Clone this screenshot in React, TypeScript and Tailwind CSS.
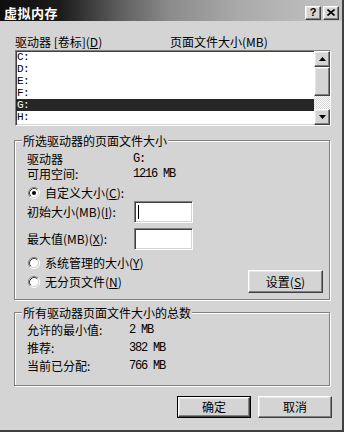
import React from "react";

const raised =
  "border border-t-white border-l-white border-r-[#404040] border-b-[#404040] shadow-[inset_-1px_-1px_0_#808080,inset_1px_1px_0_#e6e6e6] bg-[#d4d4d4]";
const sunken =
  "border border-t-[#808080] border-l-[#808080] border-r-white border-b-white shadow-[inset_1px_1px_0_#404040,inset_-1px_-1px_0_#d4d4d4]";
const etched =
  "border border-[#808080] shadow-[inset_1px_1px_0_#ffffff,1px_1px_0_#ffffff]";
const monoList = "font-['Liberation_Mono',monospace] text-[11px] leading-[12px] tracking-[-0.6px]";
const mono = "font-['Liberation_Mono',monospace] text-[12px] leading-[12px] tracking-[-1.2px]";

function Radio({ checked }: { checked?: boolean }) {
  return (
    <svg width="12" height="12" viewBox="0 0 12 12" className="shrink-0">
      <circle cx="6" cy="6" r="4.2" fill="#fff" />
      <path d="M2.11 9.89 A5.5 5.5 0 0 1 9.89 2.11" stroke="#808080" fill="none" />
      <path d="M9.89 2.11 A5.5 5.5 0 0 1 2.11 9.89" stroke="#ffffff" fill="none" />
      <path d="M2.82 9.18 A4.5 4.5 0 0 1 9.18 2.82" stroke="#404040" fill="none" />
      <path d="M9.18 2.82 A4.5 4.5 0 0 1 2.82 9.18" stroke="#d4d4d4" fill="none" />
      {checked && <circle cx="6" cy="6" r="2" fill="#000" />}
    </svg>
  );
}

function Arrow({ up }: { up?: boolean }) {
  return (
    <svg width="7" height="4" viewBox="0 0 7 4">
      <polygon points={up ? "3.5,0 7,4 0,4" : "0,0 7,0 3.5,4"} fill="#000" />
    </svg>
  );
}

function U({ c }: { c: string }) {
  return <u className="underline underline-offset-[1px]">{c}</u>;
}

export default function App() {
  const drives = ["C:", "D:", "E:", "F:", "G:", "H:"];
  return (
    <div className="w-[344px] h-[432px] bg-[#d4d4d4] font-['Noto_Sans_CJK_SC',sans-serif] text-[12px] leading-[12px] text-black flex flex-col overflow-hidden border-r-2 border-b-2 border-r-[#404040] border-b-[#404040]">
      {/* title bar */}
      <div className="h-[21px] shrink-0 flex items-center justify-between pt-[4px] pl-[4px] pr-[3px] bg-[linear-gradient(90deg,#0e0e0e_0%,#1c1c1c_18%,#5e5e5e_35%,#8c8c8c_50%,#aaaaaa_70%,#c4c4c4_100%)]">
        <span className="text-white font-bold text-[13px] leading-[14px] tracking-[0.5px]">虚拟内存</span>
        <div className="flex gap-[2px]">
          <div className={`w-[16px] h-[14px] flex items-center justify-center ${raised}`}>
            <span className="font-['Liberation_Sans',sans-serif] font-bold text-[11px] leading-[11px]">?</span>
          </div>
          <div className={`w-[16px] h-[14px] flex items-center justify-center ${raised}`}>
            <svg width="8" height="7" viewBox="0 0 8 7">
              <path d="M0.5 0.5 L7.5 6.5 M7.5 0.5 L0.5 6.5" stroke="#000" strokeWidth="1.6" />
            </svg>
          </div>
        </div>
      </div>

      {/* list labels */}
      <div className="mt-[15px] ml-[15px] h-[12px] flex">
        <span className="w-[155px]">
          驱动器 [卷标](<U c="D" />)
        </span>
        <span>页面文件大小(MB)</span>
      </div>

      {/* drive list */}
      <div className={`mt-[2px] ml-[15px] w-[316px] h-[76px] bg-white flex ${sunken}`}>
        <div className="flex-1 flex flex-col">
          {drives.map((d) => (
            <div
              key={d}
              className={`h-[12px] pl-[1px] ${monoList} ${d === "G:" ? "bg-[#262626] text-white" : ""}`}
            >
              {d}
            </div>
          ))}
        </div>
        <div className="w-[16px] flex flex-col">
          <div className={`h-[16px] flex items-center justify-center ${raised}`}>
            <Arrow up />
          </div>
          <div className={`h-[29px] ${raised}`} />
          <div className="flex-1 bg-[image:repeating-conic-gradient(#ffffff_0_25%,#d4d4d4_0_50%)] bg-[length:2px_2px]" />
          <div className={`h-[16px] flex items-center justify-center ${raised}`}>
            <Arrow />
          </div>
        </div>
      </div>

      {/* group 1 */}
      <div className={`relative mt-[14px] ml-[14px] w-[316px] pt-[10px] pl-[12px] pr-[6px] pb-[6px] flex flex-col ${etched}`}>
        <span className="absolute -top-[6px] left-[7px] px-[1px] bg-[#d4d4d4] h-[12px]">
          所选驱动器的页面文件大小
        </span>
        <div className="h-[15px] flex items-center">
          <span className="w-[106px]">驱动器</span>
          <span className={mono}>G:</span>
        </div>
        <div className="h-[15px] flex items-center">
          <span className="w-[106px]">可用空间:</span>
          <span className={mono}>1216 MB</span>
        </div>
        <div className="mt-[4px] h-[15px] flex items-center">
          <span className="ml-[1px] mr-[5px] flex">
            <Radio checked />
          </span>
          <span>
            自定义大小(<U c="C" />):
          </span>
        </div>
        <div className="mt-[1px] h-[22px] flex items-center">
          <span className="w-[107px]">
            初始大小(MB)(<U c="I" />):
          </span>
          <div className={`w-[59px] h-[22px] bg-white flex items-center pl-[3px] ${sunken}`}>
            <div className="w-[1px] h-[14px] bg-black" />
          </div>
        </div>
        <div className="mt-[5px] h-[22px] flex items-center">
          <span className="w-[107px]">
            最大值(MB)(<U c="X" />):
          </span>
          <div className={`w-[59px] h-[22px] bg-white ${sunken}`} />
        </div>
        <div className="mt-[5px] flex justify-between">
          <div className="flex flex-col gap-[3px]">
            <div className="h-[16px] flex items-center">
              <span className="ml-[1px] mr-[5px] flex">
                <Radio />
              </span>
              <span>
                系统管理的大小(<U c="Y" />)
              </span>
            </div>
            <div className="h-[16px] flex items-center">
              <span className="ml-[1px] mr-[5px] flex">
                <Radio />
              </span>
              <span>
                无分页文件(<U c="N" />)
              </span>
            </div>
          </div>
          <div className={`mt-[15px] w-[75px] h-[23px] flex items-center justify-center ${raised}`}>
            <span>
              设置(<U c="S" />)
            </span>
          </div>
        </div>
      </div>

      {/* group 2 */}
      <div className={`relative mt-[12px] ml-[14px] w-[316px] pt-[8px] pl-[12px] pb-[10px] flex flex-col ${etched}`}>
        <span className="absolute -top-[6px] left-[7px] px-[1px] bg-[#d4d4d4] h-[12px]">
          所有驱动器页面文件大小的总数
        </span>
        <div className="h-[18px] flex items-center">
          <span className="w-[102px]">允许的最小值:</span>
          <span className={mono}>2 MB</span>
        </div>
        <div className="h-[18px] flex items-center">
          <span className="w-[102px]">推荐:</span>
          <span className={mono}>382 MB</span>
        </div>
        <div className="h-[18px] flex items-center">
          <span className="w-[102px]">当前已分配:</span>
          <span className={mono}>766 MB</span>
        </div>
      </div>

      {/* buttons */}
      <div className="mt-[10px] flex justify-end gap-[7px] pr-[10px]">
        <div className="w-[74px] h-[22px] border border-black flex">
          <div className={`flex-1 flex items-center justify-center ${raised}`}>确定</div>
        </div>
        <div className={`w-[74px] h-[22px] flex items-center justify-center ${raised}`}>取消</div>
      </div>
    </div>
  );
}
